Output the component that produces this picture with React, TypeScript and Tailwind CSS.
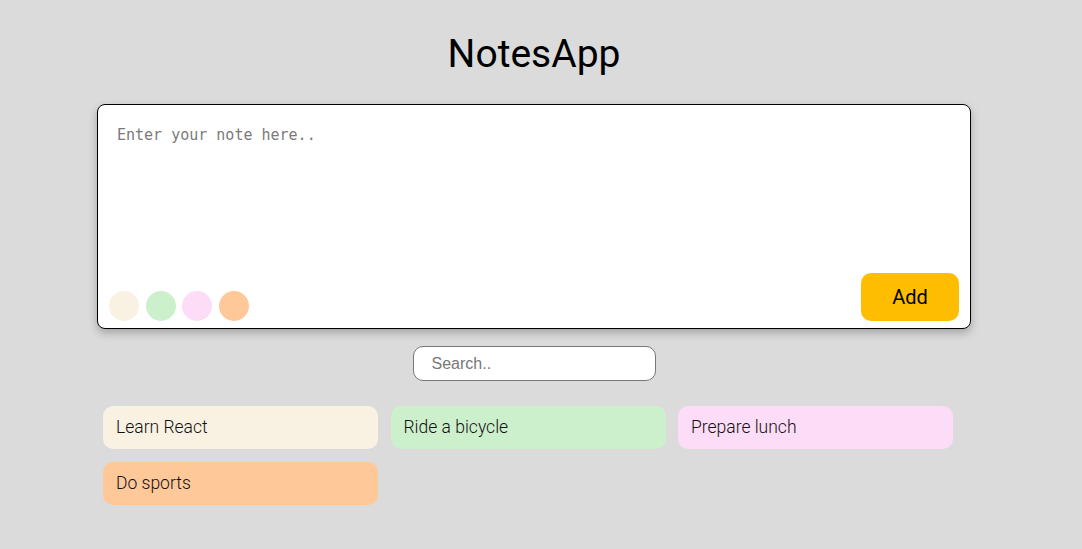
import { useState } from 'react';

type Note = { id: number; text: string; color: string };

const colors = ['bg-[#f9f1e1]', 'bg-[#cdf0cc]', 'bg-[#fddcf7]', 'bg-[#ffc899]'];

const initialNotes: Note[] = [
  { id: 1, text: 'Learn React', color: 'bg-[#f9f1e1]' },
  { id: 2, text: 'Ride a bicycle', color: 'bg-[#cdf0cc]' },
  { id: 3, text: 'Prepare lunch', color: 'bg-[#fddcf7]' },
  { id: 4, text: 'Do sports', color: 'bg-[#ffc899]' },
];

export default function App() {
  const [notes, setNotes] = useState<Note[]>(initialNotes);
  const [draft, setDraft] = useState('');
  const [color, setColor] = useState(colors[0]);
  const [query, setQuery] = useState('');

  const addNote = () => {
    if (!draft.trim()) return;
    setNotes([...notes, { id: Date.now(), text: draft, color }]);
    setDraft('');
  };

  const visible = notes.filter(n => n.text.toLowerCase().includes(query.toLowerCase()));

  return (
    <div className="min-h-[549px] bg-[#dbdbdb] font-['Roboto',sans-serif]">
      <div className="ml-[97px] w-[874px] pt-[28px] flex flex-col items-center">
        <h1 className="text-[39px] leading-[52px] text-black font-normal">NotesApp</h1>

        {/* Editor */}
        <div className="mt-[24px] w-full h-[225px] bg-white border border-black rounded-[8px] shadow-[0_4px_8px_rgba(0,0,0,0.25)] flex flex-col">
          <textarea
            value={draft}
            onChange={e => setDraft(e.target.value)}
            placeholder="Enter your note here.."
            className="flex-1 resize-none outline-none bg-transparent px-[19px] pt-[19px] text-[15px] font-['DejaVu_Sans_Mono',monospace] placeholder:text-[#7a7a7a]"
          />
          <div className="flex items-end justify-between pl-[11px] pr-[11px] pb-[7px]">
            <div className="flex gap-[6.5px]">
              {colors.map(c => (
                <button
                  key={c}
                  onClick={() => setColor(c)}
                  className={`w-[30px] h-[30px] rounded-full ${c}`}
                />
              ))}
            </div>
            <button
              onClick={addNote}
              className="w-[98px] h-[48px] rounded-[10px] bg-[#ffbd00] text-[20px] text-black"
            >
              Add
            </button>
          </div>
        </div>

        {/* Search */}
        <input
          value={query}
          onChange={e => setQuery(e.target.value)}
          placeholder="Search.."
          className="mt-[17px] w-[243px] h-[35px] bg-white border border-[#777] rounded-[10px] pl-[18px] outline-none text-[16px] font-['Liberation_Sans',sans-serif] placeholder:text-[#777]"
        />

        {/* Notes */}
        <div className="mt-[25px] self-start ml-[6px] grid grid-cols-[275px_275px_275px] gap-x-[12.5px] gap-y-[13px]">
          {visible.map(n => (
            <div
              key={n.id}
              className={`h-[43px] rounded-[10px] ${n.color} flex items-center px-[13px] text-[17.5px] font-light text-[#111]`}
            >
              {n.text}
            </div>
          ))}
        </div>
      </div>
    </div>
  );
}
